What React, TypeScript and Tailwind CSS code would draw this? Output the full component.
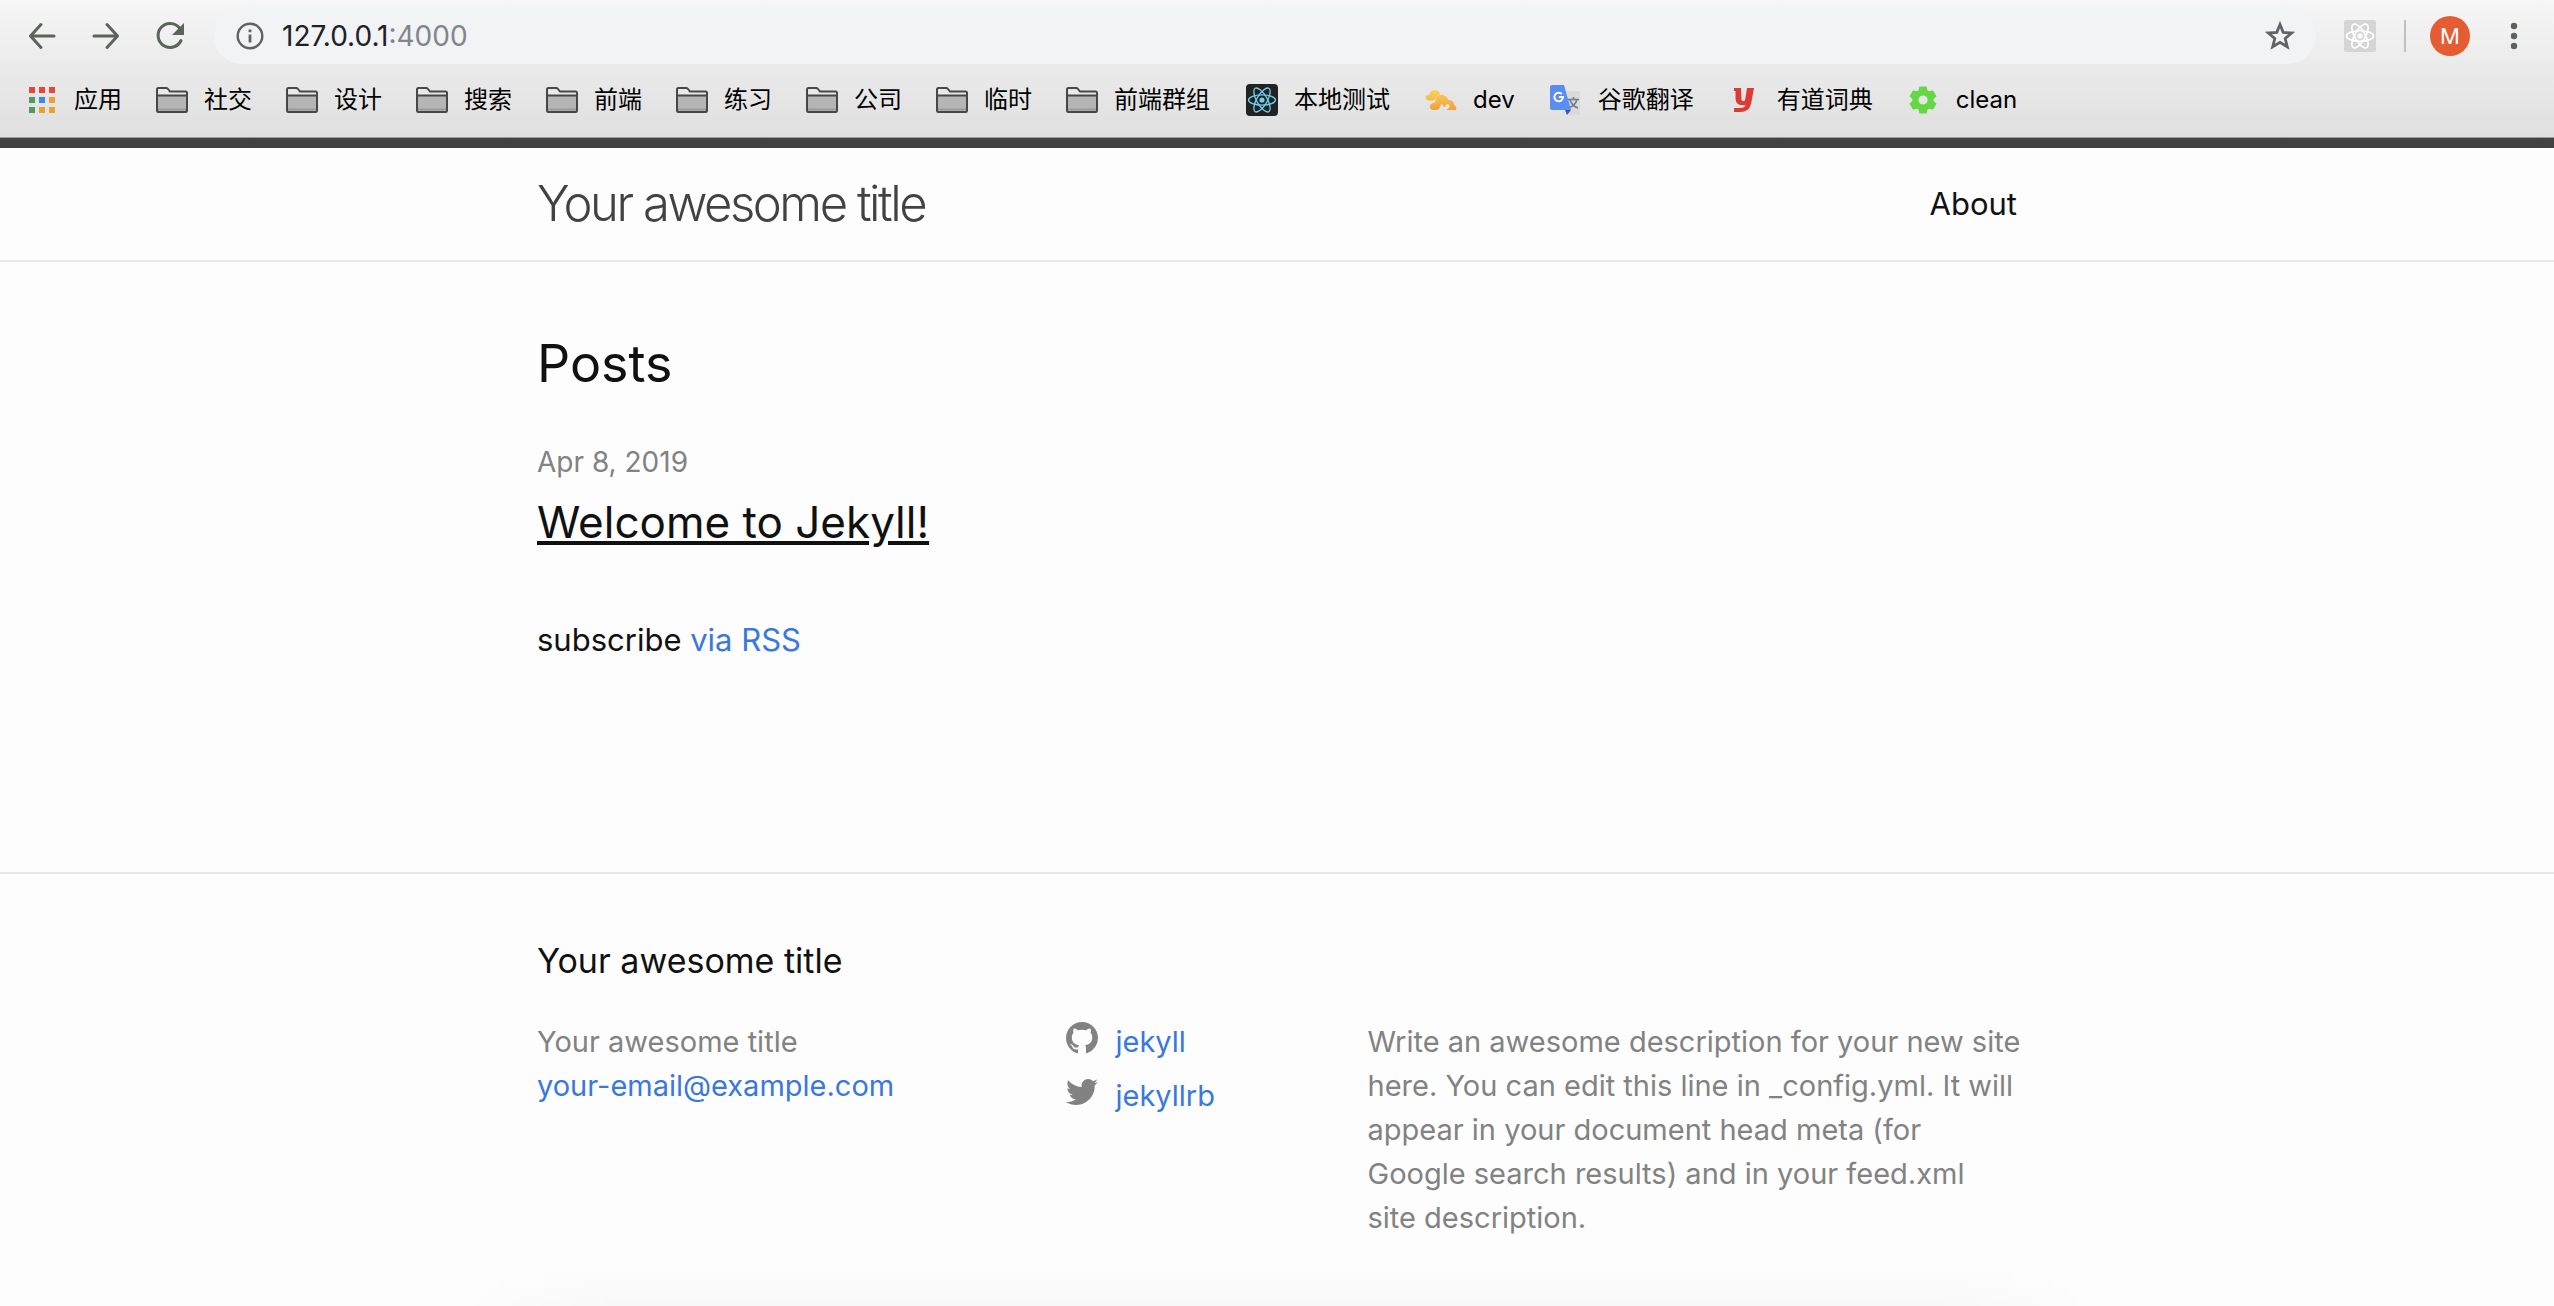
import React from "react";

function Atom({ className, width }: { className: string; width: string }) {
  return (
    <svg viewBox="-16 -16 32 32" className={className} fill="none" stroke="currentColor" strokeWidth={width}>
      <ellipse rx="13.5" ry="5.2" />
      <ellipse rx="13.5" ry="5.2" transform="rotate(60)" />
      <ellipse rx="13.5" ry="5.2" transform="rotate(120)" />
      <circle r="2.6" fill="currentColor" stroke="none" />
    </svg>
  );
}

function FolderIcon() {
  return (
    <svg viewBox="0 0 32 26" className="h-[26px] w-8">
      <path d="M1 24V2.5Q1 1 2.5 1H10Q11.2 1 12 2L14 4.500H29.500Q31 4.500 31 6V24Z" fill="#e9e9e9" />
      <path d="M1 8.500H31V24H1Z" fill="#b5b5b5" />
      <path d="M2 21.500H30V23.500H2Z" fill="#9a9a9a" />
      <path d="M1 8.500H31M1 23.500V2.500Q1 1 2.500 1H10Q11.200 1 12 2L14 4.500H29.500Q31 4.500 31 6V23.500Q31 25 29.500 25H2.500Q1 25 1 23.500Z" fill="none" stroke="#474747" strokeWidth="2" />
    </svg>
  );
}

function AppsIcon() {
  const colors = ["#e2493b", "#e2493b", "#e2493b", "#52995b", "#3f86ee", "#e8a233", "#52995b", "#e8a233", "#e8a233"];
  return (
    <svg viewBox="0 0 32 32" className="size-8">
      {colors.map((c, i) => (
        <rect key={i} x={3 + (i % 3) * 10} y={3 + Math.floor(i / 3) * 10} width="6" height="6" fill={c} />
      ))}
    </svg>
  );
}

function CloudIcon() {
  return (
    <svg viewBox="0 0 32 32" className="size-8">
      <defs>
        <linearGradient id="cloud" gradientUnits="userSpaceOnUse" x1="0" y1="6" x2="0" y2="26">
          <stop offset="0" stopColor="#f8d35c" />
          <stop offset="1" stopColor="#f4a03a" />
        </linearGradient>
      </defs>
      <g fill="url(#cloud)">
        <path d="M1 14.500C0 12 2 10.500 4 11C5 6.500 9 5 12 6.500C14.500 8 15.500 9.500 14.500 10.500C11.500 11.500 10 14 9.500 16C6 17 2 17 1 14.500Z" />
        <path d="M5 24C4 20.500 7.500 18.500 10.500 18.500C9.500 12.500 14 10 18 11C21.500 12 23 14 23 16C27 15.500 29.500 18.500 29 21C31.500 22 32 24.500 30.500 26H21C25 24.500 25.500 21.500 23.500 20.500C21.500 19.700 20 21 20.500 23C17.500 23 18 19.500 16.500 20C15.500 21.500 15 24 14 25C12 26.500 6 26.500 5 24Z" />
      </g>
    </svg>
  );
}

function TranslateIcon() {
  return (
    <svg viewBox="0 0 32 32" className="size-8">
      <path d="M13 7H28Q30 7 30 9V31H18Z" fill="#dadada" />
      <path d="M18 15.500H29M23.500 13V15.500M27 15.500Q25.500 21 19 24M20 16Q22 22 28 24" fill="none" stroke="#6c7d8c" strokeWidth="1.600" />
      <path d="M15 26H21L17 31Z" fill="#3a54b4" />
      <path d="M2 1H14L21 26H2Q0 26 0 24V3Q0 1 2 1Z" fill="#5a8df0" />
      <path d="M9 13H13A4.300 4.300 0 1 1 11.800 10" fill="none" stroke="#fff" strokeWidth="1.900" />
    </svg>
  );
}

function YoudaoIcon() {
  return (
    <svg viewBox="0 0 32 32" className="size-8">
      <path d="M5 4H12L12.500 16Q13.500 18 16 16.500L18 4H25L22 20Q20 28 11 28H5V24H11Q16 24 16.500 21Q6 22.500 6.500 14V7H5Z" fill="#dc3a33" />
    </svg>
  );
}

function GearIcon() {
  return (
    <svg viewBox="-15 -16 32 32" className="size-8">
      <g fill="#63d843">
        {[0, 60, 120, 180, 240, 300].map((a) => (
          <path key={a} d="M-4.800 -8L-3.600 -13.500H3.600L4.800 -8Z" transform={`rotate(${a})`} />
        ))}
      </g>
      <circle r="7.600" fill="none" stroke="#63d843" strokeWidth="6" />
    </svg>
  );
}

const folders = ["社交", "设计", "搜索", "前端", "练习", "公司", "临时", "前端群组"];

const sites = [
  {
    label: "本地测试",
    icon: (
      <span className="block size-8 rounded bg-[#222]">
        <Atom className="size-8 text-[#6fd0f0]" width="1.300" />
      </span>
    ),
  },
  { label: "dev", icon: <CloudIcon /> },
  { label: "谷歌翻译", icon: <TranslateIcon /> },
  { label: "有道词典", icon: <YoudaoIcon /> },
  { label: "clean", icon: <GearIcon /> },
];

function Bookmark({ icon, label }: { icon: React.ReactNode; label: string }) {
  return (
    <a href="#" className="flex shrink-0 items-center gap-4 whitespace-nowrap text-2xl leading-8 text-black">
      {icon}
      <span>{label}</span>
    </a>
  );
}

function BrowserBar() {
  return (
    <div className="border-b border-[#9c9c9c] bg-linear-to-b from-[#f6f6f6] to-[#dfdfdf]">
      <div className="flex items-center pt-2">
        <div className="flex shrink-0 gap-6 pl-[22px] pr-6 text-[#5c6359]">
          <button aria-label="Back" className="size-10">
            <svg viewBox="0 0 40 40" className="size-10" fill="none" stroke="currentColor" strokeWidth="3" strokeLinecap="round" strokeLinejoin="round">
              <path d="M32 20H8.500M19 8.500L8.500 20L19 31.500" />
            </svg>
          </button>
          <button aria-label="Forward" className="size-10">
            <svg viewBox="0 0 40 40" className="size-10" fill="none" stroke="currentColor" strokeWidth="3" strokeLinecap="round" strokeLinejoin="round">
              <path d="M8 20H31.500M21 8.500L31.500 20L21 31.500" />
            </svg>
          </button>
          <button aria-label="Reload" className="size-10">
            <svg viewBox="0 0 40 40" className="size-10" fill="none" stroke="currentColor" strokeWidth="3" strokeLinecap="round">
              <path d="M29.500 12A12 12 0 1 0 31 24.500" />
              <path d="M34 7V19H22Z" fill="currentColor" stroke="none" />
            </svg>
          </button>
        </div>
        <div className="flex h-14 flex-1 items-center rounded-full bg-[#f1f3f5] pl-[22px] pr-5">
          <svg viewBox="0 0 28 28" className="mr-[18px] size-7" fill="none" stroke="#5f6368" strokeWidth="2.400">
            <circle cx="14" cy="14" r="12.300" />
            <path d="M14 12.500V20.500M14 7.500V10.200" strokeWidth="2.800" />
          </svg>
          <div className="flex-1 text-[28px] leading-10 text-[#202124]">
            127.0.0.1<span className="text-[#80868b]">:4000</span>
          </div>
          <button aria-label="Bookmark this page" className="size-8">
            <svg viewBox="0 0 32 32" className="size-8" fill="none" stroke="#5f6368" strokeWidth="2.800">
              <path d="M16 4.500L19.200 12.400L27.700 13L21.200 18.500L23.300 26.800L16 22.300L8.700 26.800L10.800 18.500L4.300 13L12.800 12.400Z" />
            </svg>
          </button>
        </div>
        <div className="flex shrink-0 items-center pl-7 pr-5">
          <button aria-label="React Developer Tools" className="size-8 rounded-xs bg-[#d5d5d5]">
            <Atom className="size-8 text-white" width="1.600" />
          </button>
          <span className="ml-7 mr-6 h-8 w-0.5 bg-[#c0c0c0]" />
          <button className="size-10 rounded-full bg-[#e55c33] text-[22px] leading-10 text-white">M</button>
          <button aria-label="Menu" className="ml-6 size-10">
            <svg viewBox="0 0 40 40" className="size-10" fill="#5c6359">
              <circle cx="20" cy="10" r="3.200" />
              <circle cx="20" cy="20" r="3.200" />
              <circle cx="20" cy="30" r="3.200" />
            </svg>
          </button>
        </div>
      </div>
      <nav aria-label="Bookmarks" className="flex gap-9 pb-[21px] pl-[26px] pt-5">
        <div className="flex gap-[34px]">
          <Bookmark icon={<AppsIcon />} label="应用" />
          {folders.map((f) => (
            <Bookmark key={f} icon={<FolderIcon />} label={f} />
          ))}
        </div>
        <div className="flex gap-[35px]">
          {sites.map((s) => (
            <Bookmark key={s.label} icon={s.icon} label={s.label} />
          ))}
        </div>
      </nav>
    </div>
  );
}

function SocialLink({ label, children }: { label: string; children: React.ReactNode }) {
  return (
    <li>
      <a href="#" className="flex items-start gap-[18px] text-[#3a78dc]">
        <svg viewBox="0 0 16 16" className="mt-0.5 size-8 fill-[#828282]">
          {children}
        </svg>
        {label}
      </a>
    </li>
  );
}

export default function App() {
  return (
    <div className="relative min-h-screen bg-[#fdfdfd] font-['Inter','Noto_Sans_CJK_SC',sans-serif] text-[#111]">
      <BrowserBar />

      <header className="border-b-2 border-t-10 border-b-[#e8e8e8] border-t-[#424242]">
        <div className="mx-auto flex h-28 max-w-[1480px] items-center justify-between">
          <a href="#" className="text-[49px] font-light tracking-tighter text-[#424242]">
            Your awesome title
          </a>
          <nav aria-label="Site" className="text-[31px]">
            <a href="#">About</a>
          </nav>
        </div>
      </header>

      <main className="mx-auto max-w-[1480px] pb-[208px] pt-[60px]">
        <h1 className="mb-[30px] text-[52px] leading-[84px]">Posts</h1>
        <ul>
          <li>
            <time className="block text-[28px] leading-[52px] text-[#828282]">Apr 8, 2019</time>
            <h2 className="text-[44px] leading-[68px]">
              <a href="#" className="underline">
                Welcome to Jekyll!
              </a>
            </h2>
          </li>
        </ul>
        <p className="mt-[60px] text-[31px] leading-[48px]">
          subscribe{" "}
          <a href="#" className="text-[#3a78dc]">
            via RSS
          </a>
        </p>
      </main>

      <footer className="border-t-2 border-[#e8e8e8] py-[60px]">
        <div className="mx-auto max-w-[1480px]">
          <h2 className="mb-8 text-[34px] leading-[54px]">Your awesome title</h2>
          <div className="-mr-[30px] grid grid-cols-[35fr_20fr_45fr] text-[29px] leading-[44px] text-[#828282]">
            <ul>
              <li>Your awesome title</li>
              <li>
                <a href="#" className="text-[#3a78dc]">
                  your-email@example.com
                </a>
              </li>
            </ul>
            <ul className="flex flex-col gap-2.5">
              <SocialLink label="jekyll">
                <path d="M8 0C3.58 0 0 3.58 0 8C0 11.54 2.29 14.53 5.47 15.59C5.87 15.66 6.02 15.42 6.02 15.21C6.02 15.02 6.01 14.39 6.01 13.72C4 14.09 3.48 13.23 3.32 12.78C3.23 12.55 2.84 11.84 2.5 11.65C2.22 11.5 1.82 11.13 2.49 11.12C3.12 11.11 3.57 11.7 3.72 11.94C4.44 13.15 5.59 12.81 6.05 12.6C6.12 12.08 6.33 11.73 6.56 11.53C4.78 11.33 2.92 10.64 2.92 7.58C2.92 6.71 3.23 5.99 3.74 5.43C3.66 5.23 3.38 4.41 3.82 3.31C3.82 3.31 4.49 3.1 6.02 4.13C6.66 3.95 7.34 3.86 8.02 3.86C8.7 3.86 9.38 3.95 10.02 4.13C11.55 3.09 12.22 3.31 12.22 3.31C12.66 4.41 12.38 5.23 12.3 5.43C12.81 5.99 13.12 6.7 13.12 7.58C13.12 10.65 11.25 11.33 9.47 11.53C9.76 11.78 10.01 12.26 10.01 13.01C10.01 14.08 10 14.94 10 15.21C10 15.42 10.15 15.67 10.55 15.59A8.01 8.01 0 0 0 16 8C16 3.58 12.42 0 8 0Z" />
              </SocialLink>
              <SocialLink label="jekyllrb">
                <path d="M15.969 3.058c-.586.26-1.217.436-1.878.515.675-.405 1.194-1.045 1.438-1.809-.632.375-1.332.647-2.076.793-.596-.636-1.446-1.033-2.387-1.033-1.806 0-3.27 1.464-3.27 3.27 0 .256.029.506.085.745C5.163 5.404 2.753 4.102 1.14 2.124.859 2.607.698 3.168.698 3.767c0 1.134.577 2.135 1.455 2.722C1.616 6.472 1.112 6.325.671 6.08v.041c0 1.584 1.127 2.906 2.623 3.206-.274.075-.563.115-.861.115-.211 0-.416-.021-.615-.059.416 1.299 1.624 2.245 3.055 2.271-1.119.877-2.529 1.4-4.061 1.4-.264 0-.524-.015-.78-.046 1.447.928 3.166 1.469 5.013 1.469 6.015 0 9.304-4.983 9.304-9.304 0-.142-.003-.283-.009-.423.636-.46 1.191-1.036 1.629-1.692z" />
              </SocialLink>
            </ul>
            <p className="pr-5">
              Write an awesome description for your new site here. You can edit this line in _config.yml. It will appear
              in your document head meta (for
              <br />
              Google search results) and in your feed.xml
              <br />
              site description.
            </p>
          </div>
        </div>
      </footer>

      <div className="pointer-events-none absolute inset-x-[18%] bottom-0 h-9 bg-linear-to-b from-transparent to-black/2 mask-x-from-90%" />
    </div>
  );
}
